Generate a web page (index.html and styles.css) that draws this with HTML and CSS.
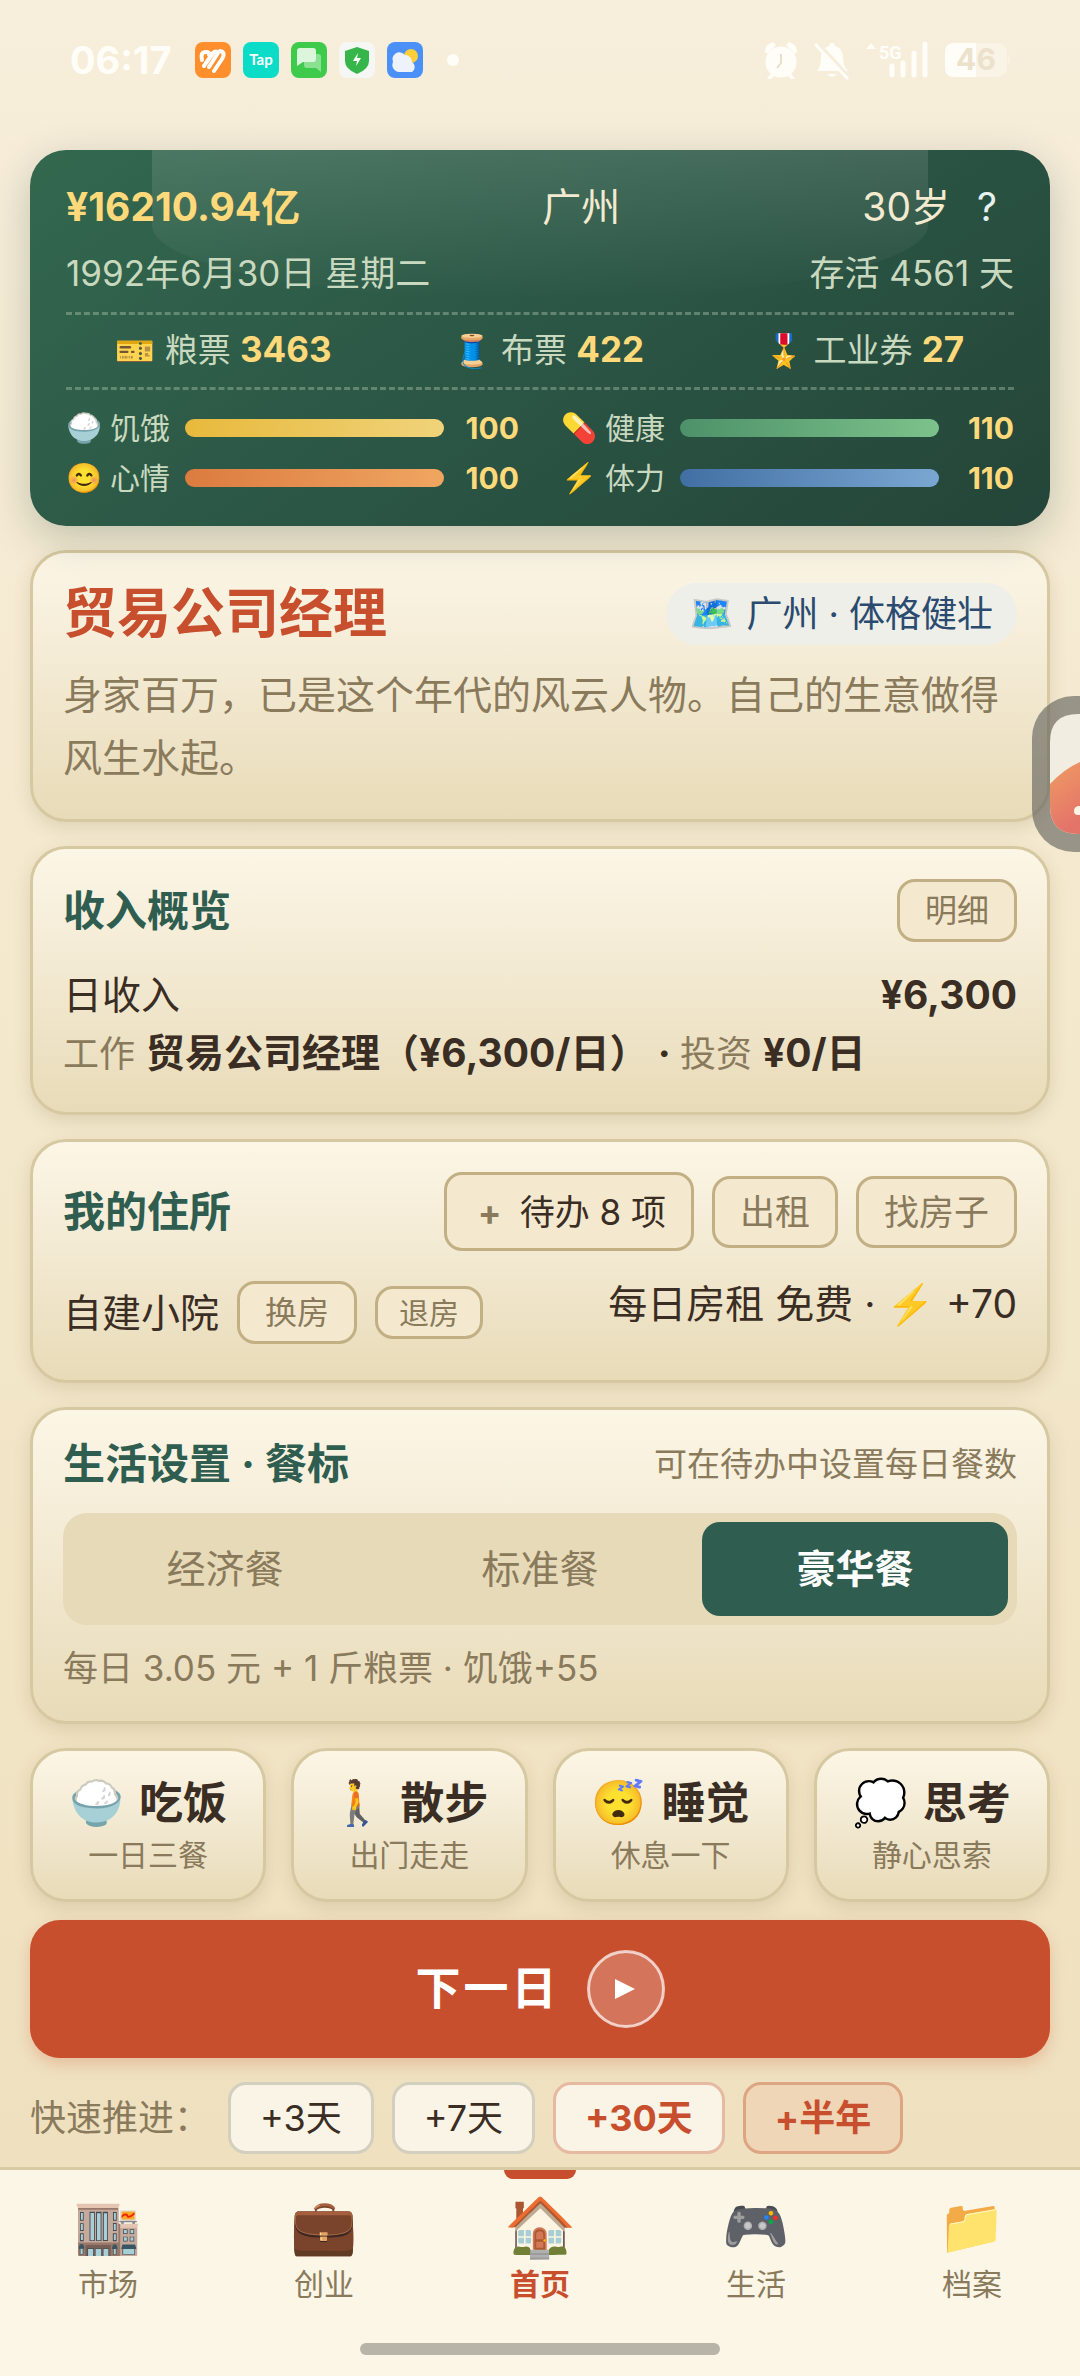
FILE: index.html
```
<!DOCTYPE html>
<html lang="zh-CN">
<head>
<meta charset="utf-8">
<title>首页</title>
<meta name="viewport" content="width=device-width,initial-scale=1">
<link rel="stylesheet" href="styles.css">
</head>
<body>

<!-- Status bar -->
<div class="statusbar">
  <span class="clock">06:17</span>
  <div class="apps">
    <svg viewBox="0 0 36 36"><rect width="36" height="36" rx="8" fill="#ff8f2d"/><g stroke="#fff" stroke-width="4" stroke-linecap="round" stroke-linejoin="round" fill="none"><path d="M7 18q-2-8 4-8 4 0 3 3M9 24l9-13q3-3 5 0L14 25M19 29l8-12q4-7-2-8"/></g></svg>
    <svg viewBox="0 0 36 36"><rect width="36" height="36" rx="8" fill="#0adcc8"/><text x="18" y="23" text-anchor="middle" class="tap">Tap</text></svg>
    <svg viewBox="0 0 36 36"><rect width="36" height="36" rx="8" fill="#3ecb4c"/><path d="M13 12h14q3 0 3 3v15l-5-4H16q-3 0-3-3z" fill="#8be192"/><path d="M9 6h13q3 0 3 3v8q0 3-3 3H12l-6 4V9q0-3 3-3z" fill="#dcf6dc"/></svg>
    <svg viewBox="0 0 36 36"><rect width="36" height="36" rx="8" fill="#f5f7f5"/><path d="M18 5l12 4v10q0 8-12 13Q6 27 6 19V9z" fill="#36b54a"/><path d="M19 11l-5 8h4l-1 5 5-8h-4z" fill="#fff"/></svg>
    <svg viewBox="0 0 36 36"><rect width="36" height="36" rx="8" fill="#4a90f8"/><circle cx="24" cy="14" r="7" fill="#ffcf3a"/><path d="M12 30a7 7 0 0 1-6-10 7 7 0 0 1 12-7 7 7 0 0 1 7 7 6 6 0 0 1 0 10z" fill="#eef3fb"/></svg>
  </div>
  <span class="dot"></span>
  <div class="system">
    <svg class="w36" viewBox="0 0 36 38"><circle cx="18" cy="21" r="15.500"/><path d="M2 11Q2 3 10 1l3 3L4 13zM34 11Q34 3 26 1l-3 3 9 9zM8 32l-4 6h4l4-4zM28 32l4 6h-4l-4-4z"/><path d="M18 13v9l-4 5" fill="none" stroke="#e9dfc8" stroke-width="2"/></svg>
    <svg class="w36" viewBox="0 0 36 38"><path d="M18 2q3 0 3 3 8 2 8 12 0 8 5 13H3q4-5 4-13Q7 7 15 5q0-3 3-3zM13 33h10q-5 6-10 0z"/><path d="M2 1l32 35" stroke="#f6eedb" stroke-width="5"/><path d="M1 3l33 35" stroke="#fffdf8" stroke-width="3"/></svg>
    <svg class="w64" viewBox="0 0 64 38"><path d="M1 8l5-6 5 6z"/><text x="14" y="18" class="net">5G</text><g stroke="#fffdf8" stroke-width="5" stroke-linecap="round"><path d="M27 25v9M38 22v12M49 12v22M60 3v31"/></g></svg>
    <svg class="w66" viewBox="0 0 66 36"><rect x="1" y="1" width="62" height="34" rx="9" opacity=".4"/><path d="M10 1h22v34H10q-9 0-9-9V10q0-9 9-9z"/><path d="M64 12q4 6 0 12z" opacity=".4"/><text x="32" y="28" text-anchor="middle" class="level">46</text></svg>
  </div>
</div>

<main>
  <!-- Dashboard -->
  <section class="dashboard">
    <div class="row main-row">
      <b class="money">¥16210.94亿</b>
      <span class="city">广州</span>
      <span class="age">30岁 <button class="help" aria-label="帮助">?</button></span>
    </div>
    <div class="row date-row"><span>1992年6月30日 星期二</span><span>存活 4561 天</span></div>
    <div class="coupons">
      <span><i class="emoji">🎫</i>粮票 <b>3463</b></span>
      <span><i class="emoji">🧵</i>布票 <b>422</b></span>
      <span><i class="emoji">🎖️</i>工业券 <b>27</b></span>
    </div>
    <div class="stats">
      <div class="stat"><i class="emoji">🍚</i><span>饥饿</span><div class="bar"><div class="fill hunger" style="width:100%"></div></div><b>100</b></div>
      <div class="stat"><i class="emoji">💊</i><span>健康</span><div class="bar"><div class="fill health" style="width:100%"></div></div><b>110</b></div>
      <div class="stat"><i class="emoji">😊</i><span>心情</span><div class="bar"><div class="fill mood" style="width:100%"></div></div><b>100</b></div>
      <div class="stat"><i class="emoji">⚡</i><span>体力</span><div class="bar"><div class="fill energy" style="width:100%"></div></div><b>110</b></div>
    </div>
  </section>

  <!-- Profile -->
  <section class="card">
    <div class="row">
      <h1>贸易公司经理</h1>
      <span class="tag"><i class="emoji">🗺️</i>广州 · 体格健壮</span>
    </div>
    <p class="desc">身家百万，已是这个年代的风云人物。自己的生意做得风生水起。</p>
  </section>

  <!-- Income -->
  <section class="card">
    <div class="row"><h2>收入概览</h2><button class="btn small">明细</button></div>
    <div class="income">
      <div class="row"><span>日收入</span><b>¥6,300</b></div>
      <p><small>工作</small> <b>贸易公司经理（¥6,300/日） · </b><small>投资</small> <b>¥0/日</b></p>
    </div>
  </section>

  <!-- Home -->
  <section class="card">
    <div class="row">
      <h2>我的住所</h2>
      <div class="btns">
        <button class="btn todo"><b>+</b>待办 8 项</button>
        <button class="btn">出租</button>
        <button class="btn">找房子</button>
      </div>
    </div>
    <div class="row house">
      <div class="btns"><span>自建小院</span><button class="btn small">换房</button><button class="btn small leave">退房</button></div>
      <span>每日房租 免费 · <i class="emoji">⚡</i> +70</span>
    </div>
  </section>

  <!-- Meals -->
  <section class="card">
    <div class="row"><h2>生活设置 · 餐标</h2><span class="hint">可在待办中设置每日餐数</span></div>
    <div class="segment">
      <button>经济餐</button>
      <button>标准餐</button>
      <button class="active">豪华餐</button>
    </div>
    <p class="note">每日 3.05 元 + 1 斤粮票 · 饥饿+55</p>
  </section>

  <div class="actions">
    <button class="action"><strong><i class="emoji">🍚</i>吃饭</strong><span>一日三餐</span></button>
    <button class="action"><strong><i class="emoji">🚶</i>散步</strong><span>出门走走</span></button>
    <button class="action"><strong><i class="emoji">😴</i>睡觉</strong><span>休息一下</span></button>
    <button class="action"><strong><i class="emoji">💭</i>思考</strong><span>静心思索</span></button>
  </div>

  <button class="next">下一日
    <svg viewBox="0 0 78 78"><circle cx="39" cy="39" r="37.500"/><path d="M28 29v20l20-10z"/></svg>
  </button>

  <div class="skip">
    <span>快速推进：</span>
    <button>+3天</button>
    <button>+7天</button>
    <button class="hot">+30天</button>
    <button class="hot half">+半年</button>
  </div>
</main>

<nav>
  <a href="#market"><i class="emoji">🏬</i>市场</a>
  <a href="#business"><i class="emoji">💼</i>创业</a>
  <a href="#home" class="active"><i class="emoji">🏠</i>首页</a>
  <a href="#life"><i class="emoji">🎮</i>生活</a>
  <a href="#files"><i class="emoji">📁</i>档案</a>
</nav>
<div class="gesture"></div>

<!-- Floating assistant at the screen edge -->
<div class="floater">
  <svg viewBox="0 0 30 120"><path d="M28 0h2v120h-2Q0 120 0 92V28Q0 0 28 0z" fill="#f1ede1"/><path d="M0 70Q14 55 30 48v72h-2Q0 120 0 92z" fill="url(#fl)"/><path d="M30 92h-2q-4 1-4 5t4 4h2z" fill="#fff4e6"/><defs><linearGradient id="fl" x1="0" y1="0" x2=".3" y2="1"><stop stop-color="#ef9c62"/><stop offset="1" stop-color="#e4746a"/></linearGradient></defs></svg>
</div>

</body>
</html>
```
FILE: styles.css
```
/* Reset & Base */
*,*::before,*::after{box-sizing:border-box;margin:0;padding:0}
body{
  font-family:Inter,"Noto Sans CJK SC",sans-serif;
  font-size:39px;line-height:58px;
  color:#3a2d24;
  background:linear-gradient(180deg,#f7eedb,#f4e8cc 45%,#efe1bf 90%);
  position:relative;
  display:flex;flex-direction:column;
  min-height:100vh;
}
button{font:inherit;color:inherit;border:0;background:none;cursor:pointer}
.row{display:flex;align-items:center;justify-content:space-between}
.emoji{font-style:normal;font-family:"Noto Color Emoji","Noto Sans CJK SC",sans-serif;font-weight:400;line-height:1}
/* Status bar */
.statusbar{display:flex;align-items:center;height:120px;padding:0 70px;color:#fffdf8}
.clock{font:700 38px/48px Inter,sans-serif;width:125px}
.apps{display:flex;gap:12px}
.apps svg{width:36px;height:36px}
.dot{width:12px;height:12px;border-radius:50%;background:#fffdf8;margin-left:24px}
.system{display:flex;align-items:center;gap:15px;margin-left:auto;fill:#fffdf8}
.system svg{height:38px;overflow:visible}
.w36{width:36px}
.w64{width:64px}
.w66{width:66px}
.tap{font:700 15px Lato,sans-serif;fill:#fff}
.net{font:700 18px Roboto,sans-serif}
.level{font:700 30px Inter,sans-serif;fill:#ece2cc}
/* Layout */
main{padding:30px 30px 13px;display:flex;flex-direction:column;gap:24px;flex:1}
/* Dashboard */
.dashboard{
  position:relative;overflow:hidden;
  padding:30px 36px;border-radius:36px;
  background:linear-gradient(145deg,#33684f,#2b5645 50%,#244539);
  box-shadow:0 12px 42px rgba(36,69,57,.25);
  color:#c9d9bf;
}
.dashboard::before{
  content:"";position:absolute;top:0;left:12%;right:12%;height:40%;
  border-radius:0 0 50% 50%;
  background:linear-gradient(180deg,rgba(255,255,255,.12),rgba(255,255,255,0));
}
.dashboard > *{position:relative}
.dashboard b{color:#ffd97a}
.main-row{line-height:54px;color:#f3ead0}
.age{display:flex;gap:10px}
.help{color:#e6f1f0;width:54px}
.date-row{font-size:35px;line-height:54px;margin:12px 0}
.coupons{
  display:flex;justify-content:space-around;align-items:center;gap:21px;
  height:78px;padding-bottom:4px;font-size:33px;
  border-top:3px dashed rgba(201,217,191,.35);
  border-bottom:3px dashed rgba(201,217,191,.35);
}
.coupons .emoji{margin-right:9px;font-size:32px}
.coupons b{font-size:35px}
.stats{display:grid;grid-template-columns:1fr 1fr;gap:14px 42px;padding-top:20px}
.stat{display:flex;align-items:center;font-size:30px;line-height:36px}
.stat .emoji{width:44px;font-size:29px}
.stat span{width:75px}
.bar{flex:1;height:18px;border-radius:9px;background:rgba(0,0,0,.2)}
.fill{height:100%;border-radius:9px}
.hunger{background:linear-gradient(90deg,#e8b93c,#f0d37a)}
.health{background:linear-gradient(90deg,#4d9169,#7dc28b)}
.mood{background:linear-gradient(90deg,#db7b40,#f0a661)}
.energy{background:linear-gradient(90deg,#416fa3,#7aa7d2)}
.stat b{width:75px;text-align:right}
/* Cards */
.card,.action{
  border:3px solid #d6c8a1;border-radius:36px;
  background:linear-gradient(180deg,#fcf6e6,#f3ead3 45%,#e8dbb8);
  box-shadow:0 6px 18px rgba(90,70,30,.14);
}
.card{padding:30px}
h1{font-size:54px;line-height:62px;color:#c84f2e}
h2{font-size:42px;line-height:48px;color:#2f5d50}
.tag{
  display:flex;align-items:center;gap:12px;
  height:62px;padding:0 24px;border-radius:31px;
  background:#edefe8;color:#2b4a6f;font-size:36px;
}
.desc{color:#8a7a5c;line-height:63px;margin-top:18px}
.income{margin-top:24px}
.income small{font-size:36px;line-height:1;color:#8a7a5c}
/* Buttons */
.btns{display:flex;align-items:center;gap:18px}
.btn{
  height:72px;padding:0 25px;
  border:3px solid #c2af84;border-radius:18px;
  background:#f4e9cf;color:#8a7a5c;font-size:35px;line-height:48px;
}
.small{height:63px;font-size:32px}
.todo{height:79px;color:#3a2d24}
.todo b{color:#8a7a5c;margin:0 18px 0 6px}
.leave{height:53px;padding:0 21px;font-size:30px}
.house{align-items:flex-start;margin-top:24px}
.house .btns{min-height:75px}
/* Meals */
.hint{font-size:33px;line-height:48px;color:#8a7a5c}
.segment{display:flex;gap:9px;padding:9px;margin-top:25px;border-radius:24px;background:#e7dab8}
.segment button{flex:1;height:94px;border-radius:18px;color:#8a7a5c}
.segment .active{background:#2f5d50;color:#fff;font-weight:700}
.note{font-size:35px;line-height:45px;margin-top:21px;color:#8a7a5c}
/* Actions */
.actions{display:grid;grid-template-columns:repeat(4,1fr);gap:25px}
.action{height:154px}
.action strong{display:flex;align-items:center;justify-content:center;gap:15px;font-size:44px;line-height:52px}
.action span{display:block;font-size:30px;line-height:36px;margin-top:8px;color:#8a7a5c}
.next{
  display:flex;align-items:center;justify-content:center;gap:27px;
  height:138px;margin-top:-6px;border-radius:30px;
  background:#c84f2e;color:#fff;font-size:45px;font-weight:700;letter-spacing:3px;
  box-shadow:0 6px 15px rgba(200,79,46,.25);
}
.next svg{width:78px;height:78px}
.next circle{fill:rgba(255,255,255,.22);stroke:rgba(255,255,255,.7);stroke-width:3}
.next path{fill:#fff}
/* Fast forward */
.skip{display:flex;align-items:center;gap:18px;font-size:36px;line-height:66px;color:#8a7a5c}
.skip span{width:180px}
.skip button{
  padding:0 29px;border:3px solid #d3cfbe;border-radius:18px;
  background:#faf4e7;color:#3a2d24;
}
.skip .hot{border-color:#e5b9a2;color:#c84f2e;font-weight:700}
.skip .half{background:#efd6b7;border-color:#dda583}
/* Bottom navigation */
nav{display:flex;height:160px;background:#fcf6e7;border-top:3px solid #d8caa3}
nav a{
  flex:1;position:relative;padding-top:24px;
  display:flex;flex-direction:column;align-items:center;
  font-size:30px;line-height:36px;color:#8a7a5c;text-decoration:none;
}
nav .emoji{font-size:54px;line-height:66px;margin-bottom:6px}
nav .active{color:#c84f2e;font-weight:700}
nav .active .emoji{font-size:58px}
nav .active::before{content:"";position:absolute;top:0;width:72px;height:9px;border-radius:0 0 9px 9px;background:#c84f2e}
.gesture{height:49px;padding-top:16px;background:#fcf6e7}
.gesture::before{content:"";display:block;width:360px;height:12px;margin:0 auto;border-radius:6px;background:#b9b4a8}
/* Floating assistant */
.floater{
  position:absolute;top:696px;right:0;width:48px;height:156px;
  padding:18px 0 18px 18px;border-radius:42px 0 0 42px;background:rgba(95,95,90,.62);
}
.floater svg{display:block;width:30px;height:120px}
```
